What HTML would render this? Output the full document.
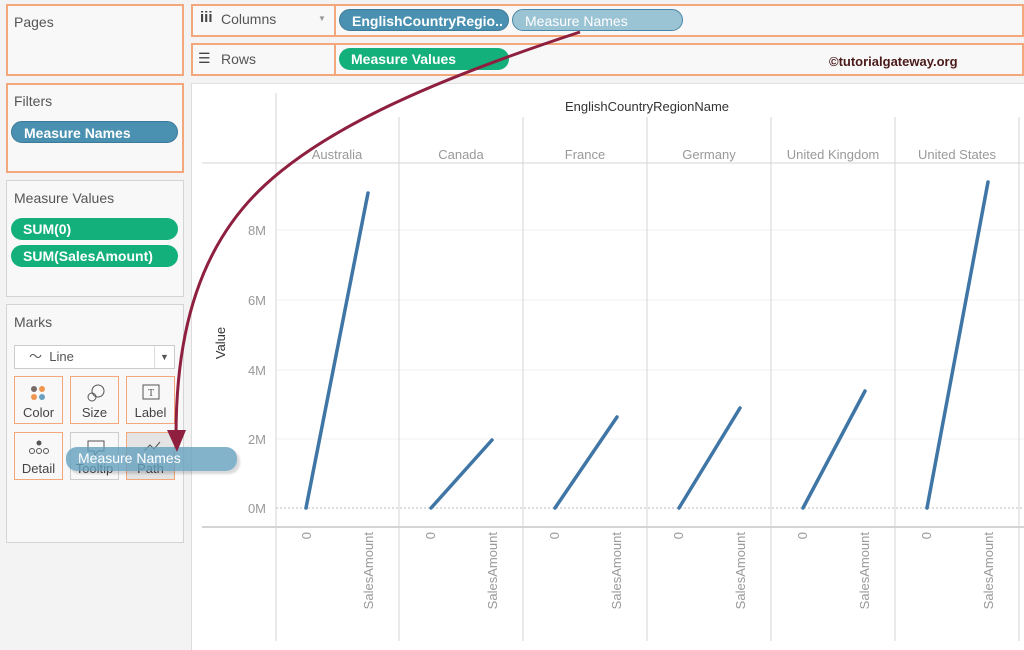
<!DOCTYPE html>
<html><head><meta charset="utf-8"><style>
*{margin:0;padding:0;box-sizing:border-box}
body{width:1024px;height:650px;overflow:hidden;background:#f3f3f3;font-family:"Liberation Sans",sans-serif;position:relative}
.a{position:absolute}
.panel{position:absolute;background:#f8f8f8;border:1px solid #d4d4d4}
.or{border:2px solid #f4a77a}
.t{position:absolute;font-size:14px;color:#555}
.pill{position:absolute;height:22px;border-radius:11px;color:#fff;font-size:14px;font-weight:bold;padding-left:12px;line-height:22px;white-space:nowrap}
.blue{background:#4a90b0;border:1px solid #3c7a98}
.green{background:#13b07c}
.mk{position:absolute;width:49px;height:48px;border:1px solid #f4a77a;background:#f8f8f8;font-size:13px;color:#444;text-align:center;padding-top:28px}
</style></head><body>
<div class="panel or" style="left:6px;top:4px;width:178px;height:72px"></div>
<div class="t" style="left:14px;top:14px">Pages</div>
<div class="panel or" style="left:6px;top:83px;width:178px;height:90px"></div>
<div class="t" style="left:14px;top:93px">Filters</div>
<div class="pill blue" style="left:11px;top:121px;width:167px">Measure Names</div>
<div class="panel" style="left:6px;top:180px;width:178px;height:117px"></div>
<div class="t" style="left:14px;top:190px">Measure Values</div>
<div class="pill green" style="left:11px;top:218px;width:167px">SUM(0)</div>
<div class="pill green" style="left:11px;top:245px;width:167px">SUM(SalesAmount)</div>
<div class="panel" style="left:6px;top:304px;width:178px;height:239px"></div>
<div class="t" style="left:14px;top:314px">Marks</div>
<div class="a" style="left:14px;top:345px;width:161px;height:24px;border:1px solid #ccc;background:#fff;font-size:13px;color:#555;line-height:22px;padding-left:14px">〜&nbsp; Line<span style="position:absolute;right:0;top:0;width:20px;height:22px;border-left:1px solid #ddd;text-align:center;font-size:9px">▼</span></div>
<div class="mk" style="left:14px;top:376px">Color<svg class="a" style="left:15px;top:8px" width="18" height="16"><circle cx="4" cy="4" r="3" fill="#7a6a6a"/><circle cx="12" cy="4" r="3" fill="#f0954e"/><circle cx="4" cy="12" r="3" fill="#f0954e"/><circle cx="12" cy="12" r="3" fill="#6aa0c0"/></svg></div>
<div class="mk" style="left:70px;top:376px">Size<svg class="a" style="left:15px;top:6px" width="20" height="20"><circle cx="12" cy="8" r="6" fill="none" stroke="#555"/><circle cx="6" cy="14" r="4" fill="none" stroke="#555"/></svg></div>
<div class="mk" style="left:126px;top:376px">Label<svg class="a" style="left:15px;top:7px" width="18" height="16"><rect x="1" y="1" width="16" height="14" fill="none" stroke="#555"/><text x="9" y="12" font-size="10" text-anchor="middle" fill="#555" font-family="Liberation Serif">T</text></svg></div>
<div class="mk" style="left:14px;top:432px">Detail<svg class="a" style="left:13px;top:6px" width="22" height="16"><circle cx="11" cy="4" r="2.5" fill="#555"/><circle cx="4" cy="12" r="2.5" fill="none" stroke="#555"/><circle cx="11" cy="12" r="2.5" fill="none" stroke="#555"/><circle cx="18" cy="12" r="2.5" fill="none" stroke="#555"/></svg></div>
<div class="mk" style="left:70px;top:432px;border-color:#ccc">Tooltip<svg class="a" style="left:15px;top:6px" width="20" height="18"><path d="M2,2 H18 V12 H12 L9,16 L8,12 H2 Z" fill="none" stroke="#555"/></svg></div>
<div class="mk" style="left:126px;top:432px;background:#e4e4e4">Path<svg class="a" style="left:15px;top:6px" width="20" height="16"><path d="M2,12 L8,6 L12,10 L18,3" fill="none" stroke="#555"/></svg></div>

<div class="panel or" style="left:191px;top:4px;width:833px;height:33px;background:#f8f8f8"></div>
<div class="a" style="left:334px;top:5px;width:2px;height:31px;background:#f4a77a"></div>
<div class="a" style="left:200px;top:9px;font-size:15px;font-weight:bold;color:#444">iii</div>
<div class="t" style="left:221px;top:11px">Columns</div>
<div class="a" style="left:318px;top:14px;font-size:8px;color:#999">▼</div>
<div class="pill blue" style="left:339px;top:9px;width:170px">EnglishCountryRegio..</div>
<div class="pill" style="left:512px;top:9px;width:171px;background:#9ac3d4;border:1px solid #4a88a8;font-weight:normal">Measure Names</div>
<div class="panel or" style="left:191px;top:43px;width:833px;height:33px"></div>
<div class="a" style="left:334px;top:44px;width:2px;height:31px;background:#f4a77a"></div>
<div class="a" style="left:198px;top:50px;font-size:14px;color:#444">☰</div>
<div class="t" style="left:221px;top:51px">Rows</div>
<div class="pill green" style="left:339px;top:48px;width:170px">Measure Values</div>
<div class="a" style="left:829px;top:54px;font-size:13px;font-weight:bold;color:#4a1a1a">©tutorialgateway.org</div>

<div class="a" style="left:191px;top:83px;width:833px;height:567px;background:#fff;border-left:1px solid #ddd;border-top:1px solid #e0e0e0"></div>
<svg class="a" style="left:0;top:0" width="1024" height="650" font-family="Liberation Sans">
<g stroke="#f0f0f0"><line x1="276" y1="230" x2="1024" y2="230"/><line x1="276" y1="300" x2="1024" y2="300"/><line x1="276" y1="370" x2="1024" y2="370"/><line x1="276" y1="439" x2="1024" y2="439"/></g>
<line x1="276" y1="508" x2="1024" y2="508" stroke="#bbb" stroke-dasharray="2,2"/>
<g stroke="#d4d4d4"><line x1="276" y1="93" x2="276" y2="641"/><line x1="399" y1="117" x2="399" y2="641"/><line x1="523" y1="117" x2="523" y2="641"/><line x1="647" y1="117" x2="647" y2="641"/><line x1="771" y1="117" x2="771" y2="641"/><line x1="895" y1="117" x2="895" y2="641"/><line x1="1019" y1="117" x2="1019" y2="641"/><line x1="202" y1="163" x2="1024" y2="163"/><line x1="202" y1="527" x2="1024" y2="527" stroke-width="2"/></g>
<text x="647" y="111" font-size="13" fill="#333" text-anchor="middle">EnglishCountryRegionName</text>
<g font-size="13" fill="#999" text-anchor="middle"><text x="337" y="159">Australia</text><text x="461" y="159">Canada</text><text x="585" y="159">France</text><text x="709" y="159">Germany</text><text x="833" y="159">United Kingdom</text><text x="957" y="159">United States</text></g>
<g font-size="13" fill="#999" text-anchor="end"><text x="266" y="235">8M</text><text x="266" y="305">6M</text><text x="266" y="375">4M</text><text x="266" y="444">2M</text><text x="266" y="513">0M</text></g>
<text transform="translate(225,343) rotate(-90)" font-size="13" fill="#333" text-anchor="middle">Value</text>
<g stroke="#3f76a6" stroke-width="3.5" stroke-linecap="round"><line x1="306" y1="508" x2="368" y2="193"/><line x1="431" y1="508" x2="492" y2="440"/><line x1="555" y1="508" x2="617" y2="417"/><line x1="679" y1="508" x2="740" y2="408"/><line x1="803" y1="508" x2="865" y2="391"/><line x1="927" y1="508" x2="988" y2="182"/></g>
<g font-size="13" fill="#999" text-anchor="end">
<text transform="translate(311,532) rotate(-90)">0</text><text transform="translate(373,532) rotate(-90)">SalesAmount</text>
<text transform="translate(435,532) rotate(-90)">0</text><text transform="translate(497,532) rotate(-90)">SalesAmount</text>
<text transform="translate(559,532) rotate(-90)">0</text><text transform="translate(621,532) rotate(-90)">SalesAmount</text>
<text transform="translate(683,532) rotate(-90)">0</text><text transform="translate(745,532) rotate(-90)">SalesAmount</text>
<text transform="translate(807,532) rotate(-90)">0</text><text transform="translate(869,532) rotate(-90)">SalesAmount</text>
<text transform="translate(931,532) rotate(-90)">0</text><text transform="translate(993,532) rotate(-90)">SalesAmount</text>
</g>
</svg>
<div class="pill" style="left:66px;top:447px;width:171px;height:24px;background:rgba(100,160,190,0.8);box-shadow:3px 3px 2px rgba(0,0,0,.15);font-weight:normal;font-size:14px">Measure Names</div>
<svg class="a" style="left:0;top:0" width="1024" height="650">
<path d="M580,32 C440,78 330,125 265,185 C200,245 176,330 176,436" fill="none" stroke="#8e1f3f" stroke-width="3"/>
<polygon points="167,430 186,430 177,452" fill="#8e1f3f"/>
</svg>
</body></html>
